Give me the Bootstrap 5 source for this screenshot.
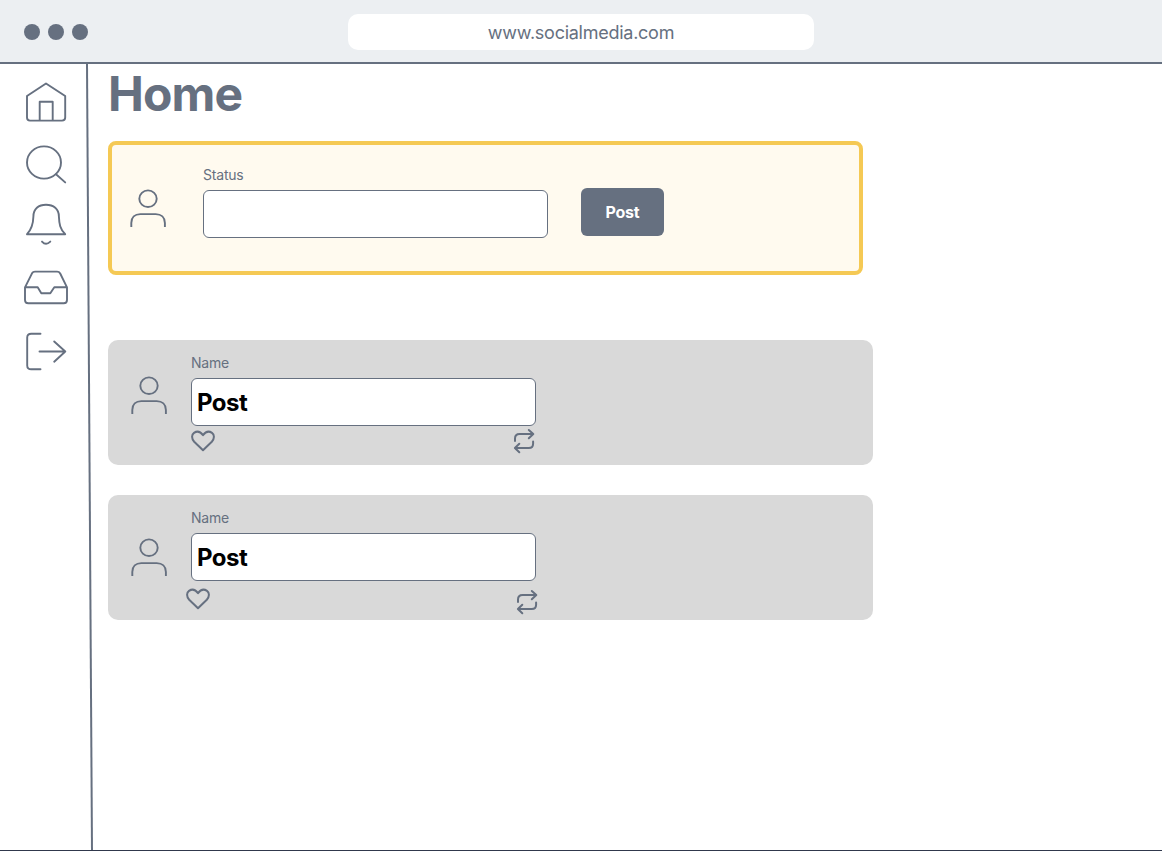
<!DOCTYPE html>
<html lang="en">
<head>
<meta charset="utf-8">
<meta name="viewport" content="width=device-width, initial-scale=1">
<title>Home</title>
<link href="https://cdn.jsdelivr.net/npm/bootstrap@5.3.0/dist/css/bootstrap.min.css" rel="stylesheet">
<style>
  :root { --ink: #667080; }
  body { font-family: Inter, "Liberation Sans", sans-serif; color: var(--ink); height: 851px; overflow: hidden; background: #fff; }
  svg { display: block; flex: none; fill: none; stroke: currentColor; stroke-width: 1.9; stroke-linecap: round; stroke-linejoin: round; }
  .browser-bar { height: 64px; background: #eceff2; border-bottom: 2px solid var(--ink); padding: 2px 24px 0; }
  .dot { width: 16px; height: 16px; border-radius: 50%; background: var(--ink); }
  .address { width: 466px; height: 36px; border-radius: 10px; font-size: 18px; margin-left: 260px; padding-top: 1px; letter-spacing: -.26px; }
  .screen { height: 787px; border-bottom: 1px solid #30384c; }
  .side-icons { width: 84px; padding: 18px 0 0 24px; }
  .main-col { padding-left: 12px; }
  h1 { font-size: 48px; line-height: 58px; font-weight: 700; margin: 1px 0 18px; letter-spacing: -.9px; }
  .status-card { width: 755px; height: 134px; border: 4px solid #f5c954; border-radius: 8px; background: #fffaef; padding: 20px 0 0 17px; }
  .post-card { width: 764.5px; height: 125px; border: 0; border-radius: 10px; background: #d9d9d9; padding: 13px 0 0 21px; }
  .field-label { font-size: 14px; line-height: 20px; margin-bottom: 5px; display: block; letter-spacing: -.2px; }
  .field { width: 345px; height: 48px; border: 1px solid var(--ink); border-radius: 6px; background: #fff; color: #000; padding: 0 5px; }
  .post-text { font-size: 24px; font-weight: 700; letter-spacing: -.5px; padding-top: 2px; }
  .btn-post { width: 83px; height: 48px; margin: 23px 0 0 33px; border-radius: 6px; background: var(--ink); color: #fff; font-size: 16px; font-weight: 700; padding: 0; letter-spacing: -.25px; }
  .btn-post:hover { background: #566070; color: #fff; }
  .actions svg { stroke-width: 2; }
</style>
</head>
<body>
<svg width="0" height="0" class="position-absolute">
  <symbol id="user" viewBox="0 0 40 44"><ellipse cx="19" cy="12.7" rx="8.7" ry="8.3"/><path stroke-linecap="butt" d="M2.3 41V37C2.3 31.500 5.800 28.100 11.300 28.100H26.700C32.200 28.100 35.900 31.500 35.900 37V41"/></symbol>
  <symbol id="heart" viewBox="0 0 24 24"><path d="M12 21.200 3.200 12.700C.2 9.500.6 5.600 3 3.900 6 1.800 9.500 2.800 12 6.200 14.500 2.800 18 1.800 21 3.900 23.400 5.600 23.800 9.500 20.800 12.700Z"/></symbol>
  <symbol id="repeat" viewBox="0 0 24 26"><path d="M3 13V10.500Q3 6 7.500 6H21.200M16.800 2 21.300 6 16.800 10.300M21.100 13.500V15.800Q21.100 20 16.800 20H3M7.300 15.700 2.900 20 7.300 24.200"/></symbol>
</svg>

<header class="browser-bar d-flex align-items-center">
  <div class="d-flex gap-2"><span class="dot"></span><span class="dot"></span><span class="dot"></span></div>
  <div class="address bg-white d-flex align-items-center justify-content-center">www.socialmedia.com</div>
</header>

<div class="screen d-flex">
  <nav class="side-icons flex-shrink-0 d-flex flex-column" aria-label="Main">
    <svg width="44" height="42" viewBox="24 82 44 42"><path d="M46 83.500 65.200 96V117.500Q65.200 120.600 62 120.600H30Q27 120.600 27 117.500V96ZM39.700 120.500V101.700H52.700V120.500"/></svg>
    <svg style="margin-top:20px" width="44" height="42" viewBox="24 144 44 42"><ellipse cx="44" cy="162.500" rx="17" ry="16.100"/><path d="M56 174.200 65.200 182.400"/></svg>
    <svg style="margin-top:16px" width="44" height="44" viewBox="24 202 44 44"><path d="M27 234.200H65.200C60 229 59.200 224 58.900 216.500 58.900 209 53.500 204.700 46 204.700S33.400 209 33.400 216.500C33.200 224 32 229 27 234.200ZM42 241.600Q46 246 50.300 241.600"/></svg>
    <svg style="margin-top:22px" width="44" height="38" viewBox="24 268 44 38"><path d="M25 287.300V300Q25 303.300 28.300 303.300H63.700Q67 303.300 67 300V287.300L60.200 273.500Q59.200 271.600 57 271.600H35Q33 271.600 32 273.300L25 287.300H37.700L41.300 293.300H50.300L54.300 287.300H67"/></svg>
    <svg style="margin-top:25px" width="44" height="42" viewBox="24 331 44 42"><path d="M40.500 333.800H31.300Q27.200 333.800 27.200 337.600V365.400Q27.200 369.200 31.300 369.200H40.500M39.500 351.500H65.300M54.200 341.500 65.300 351.500 54.200 361.700"/></svg>
  </nav>
  <svg width="12" height="786" viewBox="84 64 12 786"><path stroke-width="2" stroke-linecap="butt" d="M87 64 92 850"/></svg>

  <main class="main-col">
    <h1>Home</h1>
    <form class="status-card d-flex">
      <svg style="margin-top:21px" width="40" height="44"><use href="#user"/></svg>
      <div style="margin-left:34px">
        <label class="field-label" for="status">Status</label>
        <input class="field d-block" id="status" type="text">
      </div>
      <button class="btn btn-post" type="button">Post</button>
    </form>

    <article class="post-card d-flex" style="margin-top:65px">
      <svg style="margin:20px 21px 0 1px" width="40" height="44"><use href="#user"/></svg>
      <div>
        <span class="field-label">Name</span>
        <div class="field post-text d-flex align-items-center">Post</div>
        <div class="actions d-flex">
          <svg style="margin-top:3px" width="24" height="24"><use href="#heart"/></svg>
          <svg style="margin:2px 0 0 297px" width="24" height="26"><use href="#repeat"/></svg>
        </div>
      </div>
    </article>

    <article class="post-card d-flex" style="margin-top:30px">
      <svg style="margin:27px 21px 0 1px" width="40" height="44"><use href="#user"/></svg>
      <div>
        <span class="field-label">Name</span>
        <div class="field post-text d-flex align-items-center">Post</div>
        <div class="actions d-flex">
          <svg style="margin:5.500px 0 0 -5.500px" width="24" height="24"><use href="#heart"/></svg>
          <svg style="margin:8px 0 0 305.500px" width="24" height="26"><use href="#repeat"/></svg>
        </div>
      </div>
    </article>
  </main>
</div>
<script src="https://cdn.jsdelivr.net/npm/bootstrap@5.3.0/dist/js/bootstrap.bundle.min.js"></script>
</body>
</html>
